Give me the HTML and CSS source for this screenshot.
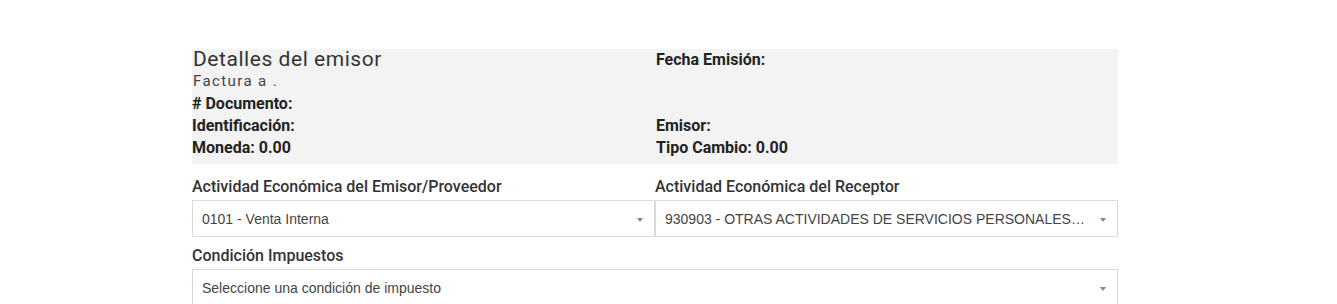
FILE: index.html
```html
<!DOCTYPE html>
<html lang="es">
<head>
<meta charset="utf-8">
<link rel="stylesheet" href="styles.css">
</head>
<body>
<div class="wrap">
  <div class="details">
    <div class="title">Detalles del emisor</div>
    <div class="lbl first right">Fecha Emisión:</div>
    <div class="sub">Factura a .</div>
    <div class="right"></div>
    <div class="lbl"># Documento:</div>
    <div class="right"></div>
    <div class="lbl">Identificación:</div>
    <div class="lbl right">Emisor:</div>
    <div class="lbl">Moneda: 0.00</div>
    <div class="lbl right">Tipo Cambio: 0.00</div>
  </div>
  <div class="fields">
    <div class="field">
      <div class="flabel">Actividad Económica del Emisor/Proveedor</div>
      <div class="select"><span class="val">0101 - Venta Interna</span><span class="arrow"></span></div>
    </div>
    <div class="field">
      <div class="flabel">Actividad Económica del Receptor</div>
      <div class="select"><span class="val">930903 - OTRAS ACTIVIDADES DE SERVICIOS PERSONALES N.C.P.</span><span class="arrow"></span></div>
    </div>
  </div>
  <div class="field full">
    <div class="flabel">Condición Impuestos</div>
    <div class="select"><span class="val">Seleccione una condición de impuesto</span><span class="arrow"></span></div>
  </div>
</div>
</body>
</html>
```
FILE: styles.css
```css
html, body {
  margin: 0;
  padding: 0;
  background: #fff;
}
body {
  font-family: Roboto, "Liberation Sans", sans-serif;
  color: #333;
}
.wrap {
  width: 926px;
  margin: 49px 0 0 192px;
}
.details {
  background: #f3f3f3;
  display: grid;
  grid-template-columns: 463px 463px;
  grid-template-rows: 21px 23.5px 22.5px 21.5px 20.5px;
  padding-bottom: 6px;
}
.details > div {
  white-space: nowrap;
}
.right {
  padding-left: 1px;
}
.title {
  font-size: 21px;
  line-height: 21px;
  letter-spacing: 0.55px;
  color: #333;
  padding-left: 1px;
}
.sub {
  font-size: 15px;
  line-height: 22px;
  letter-spacing: 1.4px;
  color: #444;
  padding-left: 1px;
}
.lbl {
  font-size: 16px;
  line-height: 20.5px;
  font-weight: 700;
  color: #222;
}
.lbl.first {
  line-height: 22px;
}
.fields {
  display: grid;
  grid-template-columns: 463px 463px;
  margin-top: 10px;
}
.flabel {
  font-size: 16px;
  font-weight: 500;
  color: #333;
  height: 26px;
  line-height: 26px;
}
.select {
  height: 37px;
  box-sizing: border-box;
  border: 1px solid #dadada;
  background: #fff;
  display: flex;
  align-items: center;
  padding: 0 11px 0 9px;
  font-family: "Liberation Sans", Arial, sans-serif;
  font-size: 14px;
  color: #444;
}
.val {
  flex: 1;
  white-space: nowrap;
  overflow: hidden;
  text-overflow: ellipsis;
  padding-right: 12px;
}
.arrow {
  width: 0;
  height: 0;
  border-left: 3px solid transparent;
  border-right: 3px solid transparent;
  border-top: 4px solid #888;
  margin-top: 2px;
}
.full {
  margin-top: 6px;
}
```
